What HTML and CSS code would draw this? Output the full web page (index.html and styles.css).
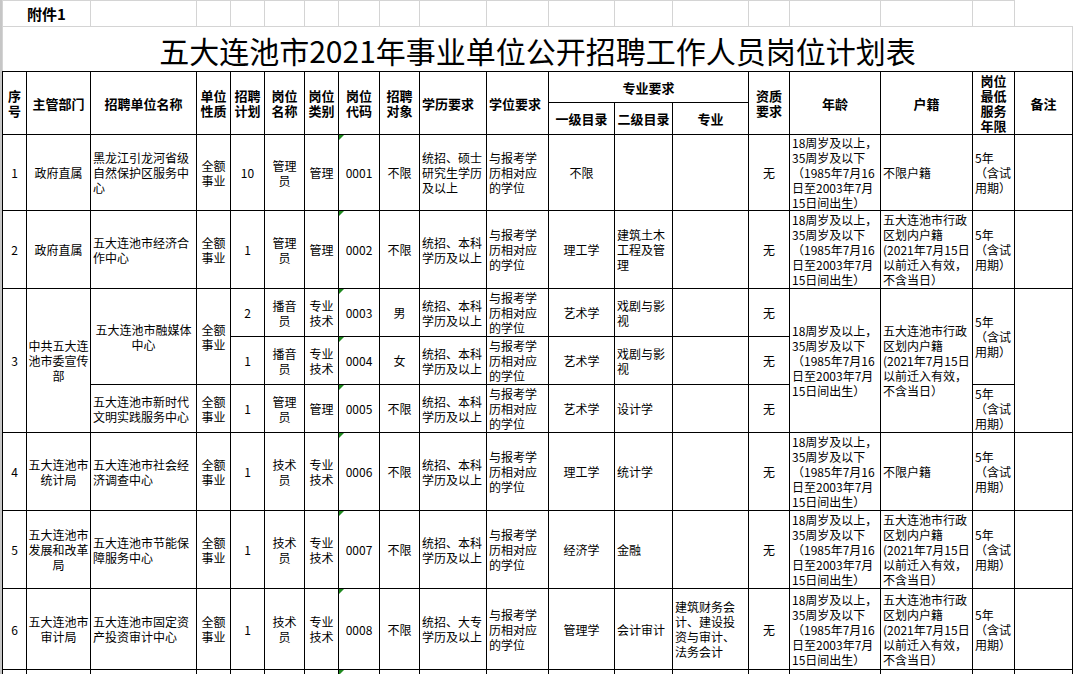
FILE: index.html
```html
<!DOCTYPE html>
<html lang="zh-CN">
<head>
<meta charset="utf-8">
<title>五大连池市2021年事业单位公开招聘工作人员岗位计划表</title>
<link rel="stylesheet" href="styles.css">
</head>
<body>
<div class="sheet">
<table class="plan">
<colgroup>
<col class="w24"><col class="w64"><col class="w106"><col class="w34"><col class="w34"><col class="w40"><col class="w34"><col class="w41"><col class="w40"><col class="w67"><col class="w62"><col class="w66"><col class="w58"><col class="w76"><col class="w41"><col class="w91"><col class="w92"><col class="w42"><col class="w58">
</colgroup>
<tr class="r-top">
<td class="grid annex" colspan="2">附件1</td>
<td class="grid"></td><td class="grid"></td><td class="grid"></td><td class="grid"></td><td class="grid"></td><td class="grid"></td><td class="grid"></td><td class="grid"></td><td class="grid"></td><td class="grid"></td><td class="grid"></td><td class="grid"></td><td class="grid"></td><td class="grid"></td><td class="grid"></td><td class="grid"></td>
</tr>
<tr class="r-title">
<td class="title" colspan="19">五大连池市2021年事业单位公开招聘工作人员岗位计划表</td>
</tr>
<tr class="r-h1">
<th rowspan="2">序<br>号</th>
<th rowspan="2">主管部门</th>
<th rowspan="2">招聘单位名称</th>
<th rowspan="2">单位<br>性质</th>
<th rowspan="2">招聘<br>计划</th>
<th rowspan="2">岗位<br>名称</th>
<th rowspan="2">岗位<br>类别</th>
<th rowspan="2">岗位<br>代码</th>
<th rowspan="2">招聘<br>对象</th>
<th rowspan="2" class="hl">学历要求</th>
<th rowspan="2" class="hl">学位要求</th>
<th colspan="3">专业要求</th>
<th rowspan="2">资质<br>要求</th>
<th rowspan="2">年龄</th>
<th rowspan="2">户籍</th>
<th rowspan="2">岗位<br>最低<br>服务<br>年限</th>
<th rowspan="2">备注</th>
</tr>
<tr class="r-h2">
<th>一级目录</th>
<th>二级目录</th>
<th>专业</th>
</tr>

<tr class="r-76">
<td class="c">1</td>
<td class="c">政府直属</td>
<td>黑龙江引龙河省级<br>自然保护区服务中<br>心</td>
<td class="c">全额<br>事业</td>
<td class="c">10</td>
<td class="c">管理<br>员</td>
<td class="c">管理</td>
<td class="c code">0001</td>
<td class="c">不限</td>
<td>统招、硕士<br>研究生学历<br>及以上</td>
<td>与报考学<br>历相对应<br>的学位</td>
<td class="c">不限</td>
<td></td>
<td></td>
<td class="c">无</td>
<td>18周岁及以上，<br>35周岁及以下<br>（1985年7月16<br>日至2003年7月<br>15日间出生）</td>
<td>不限户籍</td>
<td>5年<br>（含试<br>用期）</td>
<td></td>
</tr>

<tr class="r-78">
<td class="c">2</td>
<td class="c">政府直属</td>
<td>五大连池市经济合<br>作中心</td>
<td class="c">全额<br>事业</td>
<td class="c">1</td>
<td class="c">管理<br>员</td>
<td class="c">管理</td>
<td class="c code">0002</td>
<td class="c">不限</td>
<td>统招、本科<br>学历及以上</td>
<td>与报考学<br>历相对应<br>的学位</td>
<td class="c">理工学</td>
<td>建筑土木<br>工程及管<br>理</td>
<td></td>
<td class="c">无</td>
<td>18周岁及以上，<br>35周岁及以下<br>（1985年7月16<br>日至2003年7月<br>15日间出生）</td>
<td>五大连池市行政<br>区划内户籍<br>(2021年7月15日<br>以前迁入有效，<br>不含当日）</td>
<td>5年<br>（含试<br>用期）</td>
<td></td>
</tr>

<tr class="r-48">
<td class="c" rowspan="3">3</td>
<td class="c" rowspan="3">中共五大连<br>池市委宣传<br>部</td>
<td class="c" rowspan="2">五大连池市融媒体<br>中心</td>
<td class="c" rowspan="2">全额<br>事业</td>
<td class="c">2</td>
<td class="c">播音<br>员</td>
<td class="c">专业<br>技术</td>
<td class="c code">0003</td>
<td class="c">男</td>
<td>统招、本科<br>学历及以上</td>
<td>与报考学<br>历相对应<br>的学位</td>
<td class="c">艺术学</td>
<td>戏剧与影<br>视</td>
<td></td>
<td class="c">无</td>
<td rowspan="3">18周岁及以上，<br>35周岁及以下<br>（1985年7月16<br>日至2003年7月<br>15日间出生）</td>
<td rowspan="3">五大连池市行政<br>区划内户籍<br>(2021年7月15日<br>以前迁入有效，<br>不含当日）</td>
<td rowspan="2">5年<br>（含试<br>用期）</td>
<td rowspan="3"></td>
</tr>
<tr class="r-48">
<td class="c">1</td>
<td class="c">播音<br>员</td>
<td class="c">专业<br>技术</td>
<td class="c code">0004</td>
<td class="c">女</td>
<td>统招、本科<br>学历及以上</td>
<td>与报考学<br>历相对应<br>的学位</td>
<td class="c">艺术学</td>
<td>戏剧与影<br>视</td>
<td></td>
<td class="c">无</td>
</tr>
<tr class="r-48">
<td>五大连池市新时代<br>文明实践服务中心</td>
<td class="c">全额<br>事业</td>
<td class="c">1</td>
<td class="c">管理<br>员</td>
<td class="c">管理</td>
<td class="c code">0005</td>
<td class="c">不限</td>
<td>统招、本科<br>学历及以上</td>
<td>与报考学<br>历相对应<br>的学位</td>
<td class="c">艺术学</td>
<td>设计学</td>
<td></td>
<td class="c">无</td>
<td>5年<br>（含试<br>用期）</td>
</tr>

<tr class="r-78">
<td class="c">4</td>
<td class="c">五大连池市<br>统计局</td>
<td>五大连池市社会经<br>济调查中心</td>
<td class="c">全额<br>事业</td>
<td class="c">1</td>
<td class="c">技术<br>员</td>
<td class="c">专业<br>技术</td>
<td class="c code">0006</td>
<td class="c">不限</td>
<td>统招、本科<br>学历及以上</td>
<td>与报考学<br>历相对应<br>的学位</td>
<td class="c">理工学</td>
<td>统计学</td>
<td></td>
<td class="c">无</td>
<td>18周岁及以上，<br>35周岁及以下<br>（1985年7月16<br>日至2003年7月<br>15日间出生）</td>
<td>不限户籍</td>
<td>5年<br>（含试<br>用期）</td>
<td></td>
</tr>

<tr class="r-78">
<td class="c">5</td>
<td class="c">五大连池市<br>发展和改革<br>局</td>
<td>五大连池市节能保<br>障服务中心</td>
<td class="c">全额<br>事业</td>
<td class="c">1</td>
<td class="c">技术<br>员</td>
<td class="c">专业<br>技术</td>
<td class="c code">0007</td>
<td class="c">不限</td>
<td>统招、本科<br>学历及以上</td>
<td>与报考学<br>历相对应<br>的学位</td>
<td class="c">经济学</td>
<td>金融</td>
<td></td>
<td class="c">无</td>
<td>18周岁及以上，<br>35周岁及以下<br>（1985年7月16<br>日至2003年7月<br>15日间出生）</td>
<td>五大连池市行政<br>区划内户籍<br>(2021年7月15日<br>以前迁入有效，<br>不含当日）</td>
<td>5年<br>（含试<br>用期）</td>
<td></td>
</tr>

<tr class="r-81">
<td class="c">6</td>
<td class="c">五大连池市<br>审计局</td>
<td>五大连池市固定资<br>产投资审计中心</td>
<td class="c">全额<br>事业</td>
<td class="c">1</td>
<td class="c">技术<br>员</td>
<td class="c">专业<br>技术</td>
<td class="c code">0008</td>
<td class="c">不限</td>
<td>统招、大专<br>学历及以上</td>
<td>与报考学<br>历相对应<br>的学位</td>
<td class="c">管理学</td>
<td>会计审计</td>
<td>建筑财务会<br>计、建设投<br>资与审计、<br>法务会计</td>
<td class="c">无</td>
<td>18周岁及以上，<br>35周岁及以下<br>（1985年7月16<br>日至2003年7月<br>15日间出生）</td>
<td>五大连池市行政<br>区划内户籍<br>(2021年7月15日<br>以前迁入有效，<br>不含当日）</td>
<td>5年<br>（含试<br>用期）</td>
<td></td>
</tr>

<tr class="r-next">
<td></td><td></td><td></td><td></td><td></td><td></td><td></td><td class="code"></td><td></td><td></td><td></td><td></td><td></td><td></td><td></td><td></td><td></td><td></td><td></td>
</tr>
</table>
</div>
</body>
</html>
```

FILE: styles.css
```css
html, body {
  margin: 0;
  padding: 0;
  background: #ffffff;
}

body {
  font-family: "Noto Sans CJK SC", "Noto Sans", sans-serif;
  color: #000000;
  overflow: hidden;
}

.sheet {
  border-left: 2px solid #c6c6c6;
  width: 1073px;
}

.plan {
  border-collapse: collapse;
  table-layout: fixed;
  width: 1070px;
}

.w24 { width: 24px; }
.w34 { width: 34px; }
.w40 { width: 40px; }
.w41 { width: 41px; }
.w42 { width: 42px; }
.w58 { width: 58px; }
.w62 { width: 62px; }
.w64 { width: 64px; }
.w66 { width: 66px; }
.w67 { width: 67px; }
.w76 { width: 76px; }
.w91 { width: 91px; }
.w92 { width: 92px; }
.w106 { width: 106px; }

.plan td,
.plan th {
  border: 1px solid #000000;
  padding: 0 1px 0 2px;
  font-size: 12px;
  line-height: 15px;
  font-weight: normal;
  text-align: left;
  vertical-align: middle;
  white-space: nowrap;
  overflow: hidden;
}

.plan th {
  font-size: 13px;
  font-weight: bold;
  text-align: center;
  padding: 0 1px;
}

.plan th.hl {
  text-align: left;
  padding-left: 2px;
}

.plan td.c {
  text-align: center;
  padding: 0 1px;
}

.r-top { height: 26px; }
.r-title { height: 45px; }
.r-h1 { height: 31px; }
.r-h2 { height: 32px; }
.r-76 { height: 76px; }
.r-78 { height: 78px; }
.r-48 { height: 48px; }
.r-81 { height: 81px; }
.r-next { height: 24px; }

.plan td.grid {
  border: 1px solid #d4d4d4;
}

.plan td.annex {
  font-size: 15px;
  font-weight: bold;
  text-align: center;
  padding: 0;
}

.plan td.title {
  border-top: 1px solid #d4d4d4;
  border-left: 1px solid #d4d4d4;
  border-right: 1px solid #d4d4d4;
  border-bottom: 1px solid #000000;
  font-size: 30px;
  line-height: 36px;
  text-align: center;
  padding: 2px 0 0 0;
}

.plan td.code {
  position: relative;
}

.plan td.code::before {
  content: "";
  position: absolute;
  left: 0;
  top: 0;
  width: 0;
  height: 0;
  border-top: 5px solid #1f8a1f;
  border-right: 5px solid transparent;
}
```
